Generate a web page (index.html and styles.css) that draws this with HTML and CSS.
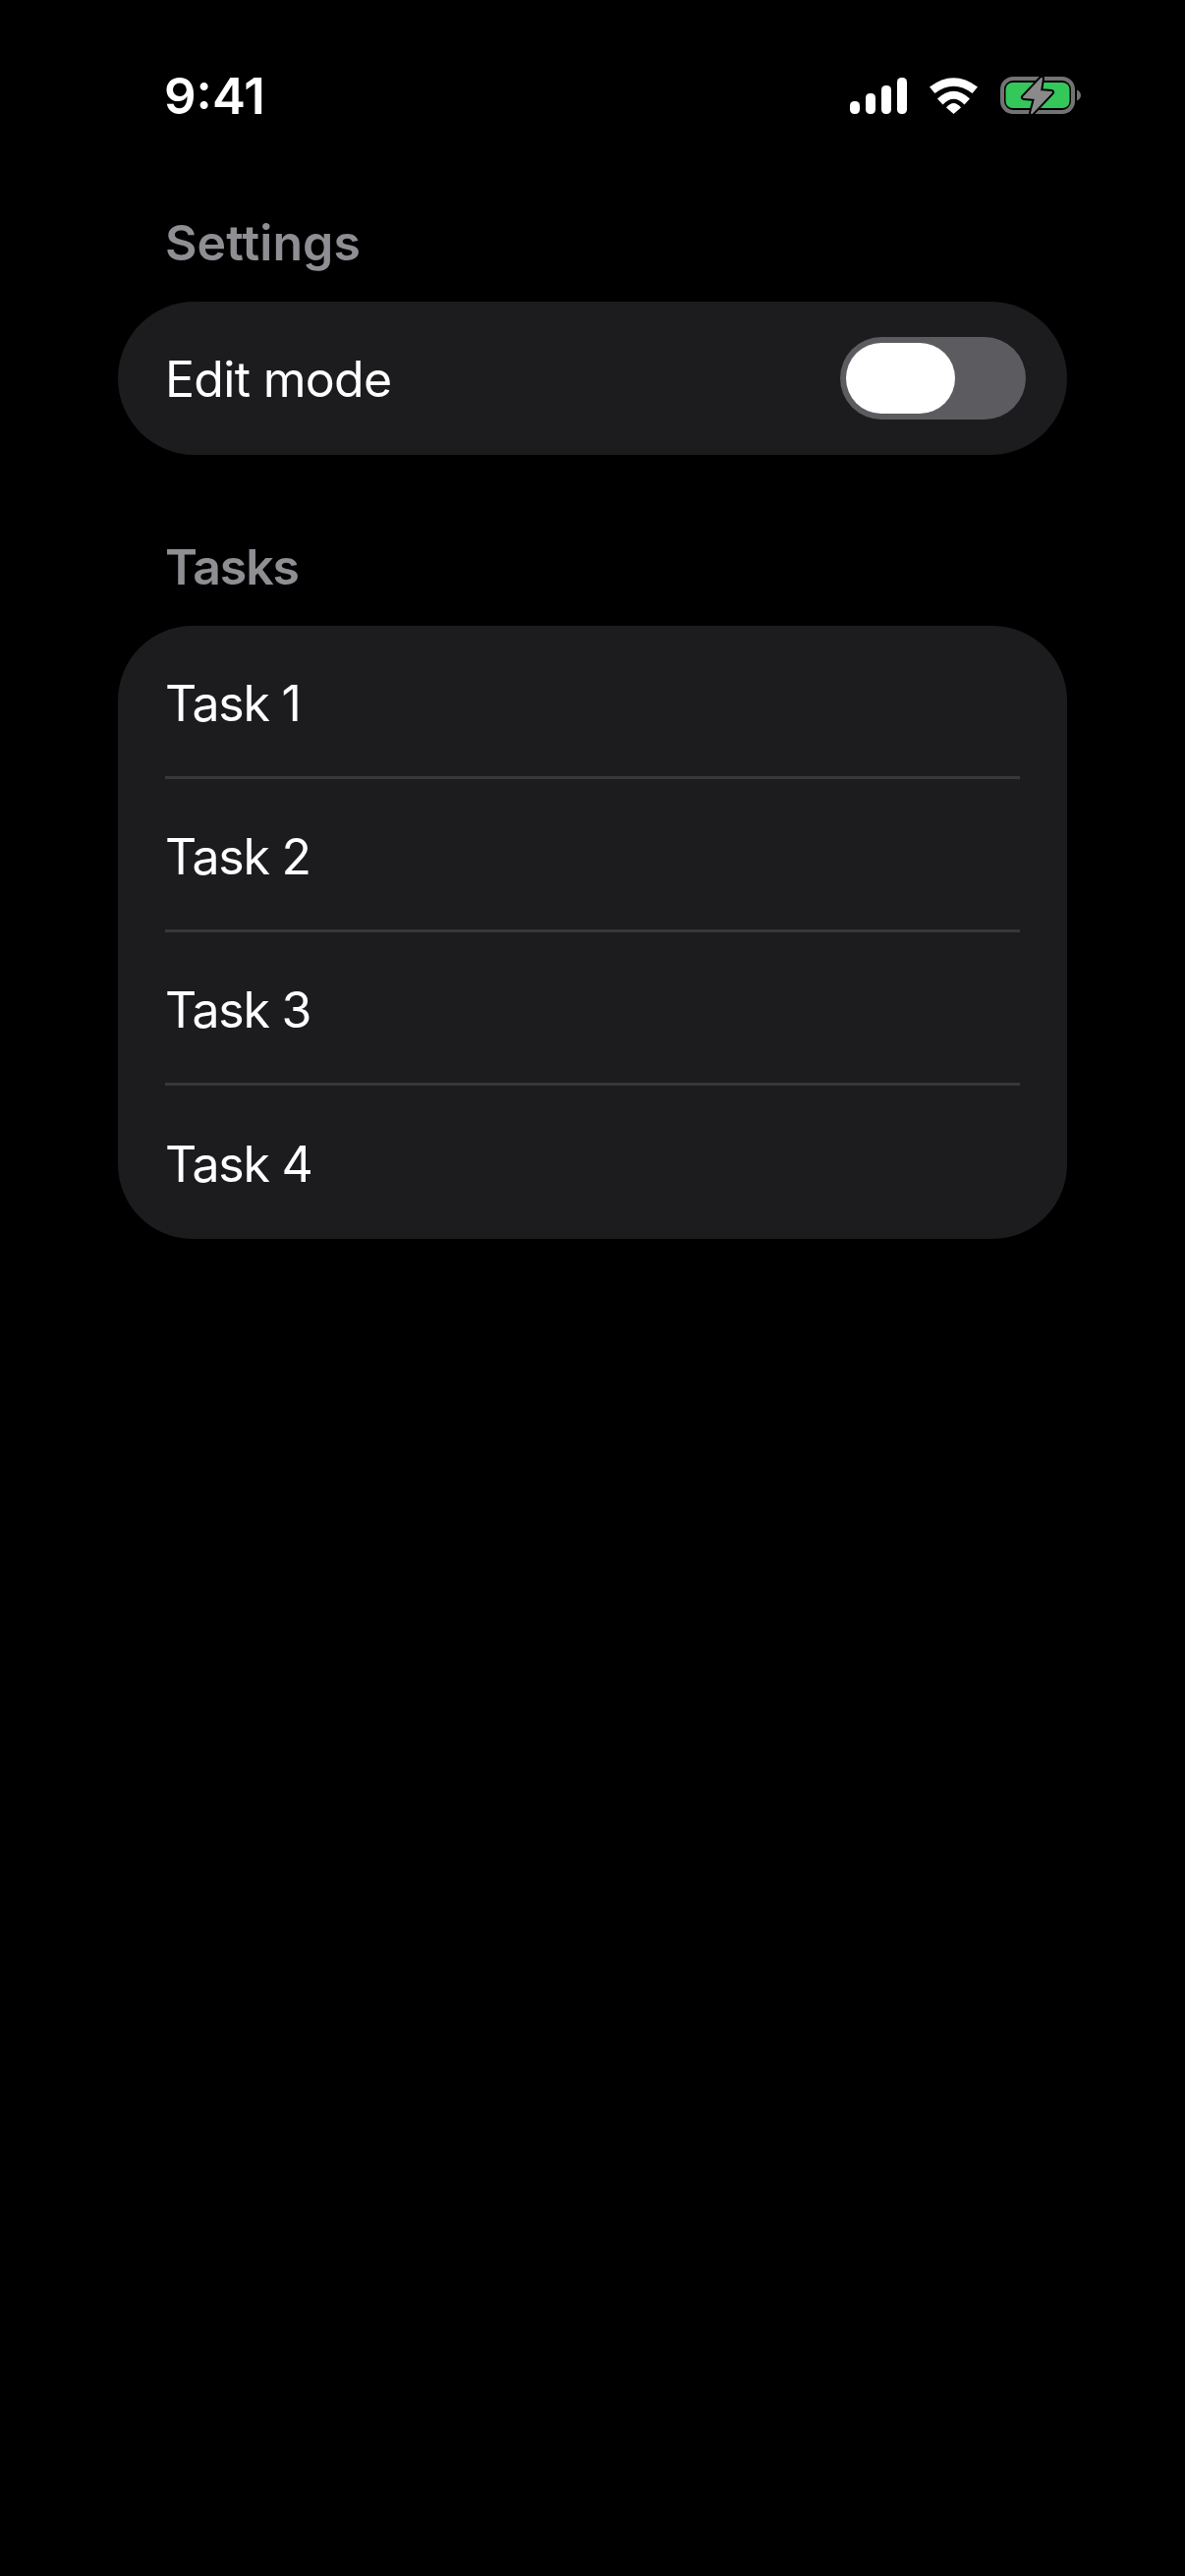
FILE: index.html
```html
<!DOCTYPE html>
<html lang="en">

<head>
    <meta charset="UTF-8">
    <meta name="viewport" content="width=device-width, initial-scale=1.0">
    <title>Settings</title>
    <link rel="stylesheet" href="styles.css">
</head>

<body>
    <div class="status">
        <span class="time">9:41</span>
        <div class="status-icons">
            <svg class="signal" width="58" height="37" viewBox="0 0 58 37">
                <rect x="0" y="24" width="10" height="13" rx="4.5" fill="#fff" />
                <rect x="16" y="16" width="10" height="21" rx="4.5" fill="#fff" />
                <rect x="32" y="8" width="10" height="29" rx="4.5" fill="#fff" />
                <rect x="48" y="0" width="10" height="37" rx="4.5" fill="#fff" />
            </svg>
            <svg class="wifi" width="50" height="37" viewBox="0 0 50 37">
                <path d="M0 9.5 Q24.5 -9 49 9.5 L43.5 16 Q24.5 1.5 5.5 16 Z" fill="#fff" />
                <path d="M8 21.5 Q24.5 6 41 21.5 L35.5 27.5 Q24.5 16 13.5 27.5 Z" fill="#fff" />
                <path d="M17 30.5 Q24.5 21.5 32 30.5 L24.5 37 Z" fill="#fff" />
            </svg>
            <svg class="battery" width="82" height="39" viewBox="0 0 82 39">
                <rect x="2" y="2" width="72" height="34" rx="11" fill="none" stroke="#737373" stroke-width="4" />
                <rect x="5.5" y="6" width="65" height="26" rx="7" fill="#34c759" />
                <path d="M78 13.5 C80.5 14.5 82 16.5 82 19 C82 21.5 80.5 23.5 78 24.5 Z" fill="#737373" />
                <path d="M42 2 L24 21 L36 22 L32 37 L52 16 L40 15 Z" fill="#000" stroke="#000" stroke-width="6" stroke-linejoin="round" />
                <path d="M42 2 L24 21 L36 22 L32 37 L52 16 L40 15 Z" fill="#8a8a8a" stroke="#8a8a8a" stroke-width="2" stroke-linejoin="round" />
            </svg>
        </div>
    </div>

    <main>
        <h2 class="section-title">Settings</h2>
        <div class="card card-pill">
            <div class="row row-toggle">
                <span>Edit mode</span>
                <div class="toggle">
                    <div class="thumb"></div>
                </div>
            </div>
        </div>

        <h2 class="section-title section-second">Tasks</h2>
        <ul class="card">
            <li class="row">Task 1</li>
            <li class="row">Task 2</li>
            <li class="row">Task 3</li>
            <li class="row">Task 4</li>
        </ul>
    </main>
</body>

</html>
```

FILE: styles.css
```css
* {
    margin: 0;
    padding: 0;
    box-sizing: border-box;
    list-style: none;
}

html,
body {
    width: 100%;
    height: 100%;
    background-color: #000;
    color: #fff;
    font-family: Inter, "Liberation Sans", sans-serif;
    overflow: hidden;
}

.status {
    height: 196px;
    padding: 70px 106px 0 167px;
    display: flex;
    justify-content: space-between;
    align-items: flex-start;
}

.time {
    font-size: 51px;
    line-height: 56px;
    font-weight: 600;
}

.status-icons {
    display: flex;
    align-items: flex-start;
    padding-top: 9px;
}

.signal {
    margin-right: 23px;
}

.wifi {
    margin-right: 22px;
}

.battery {
    margin-top: -1px;
}

main {
    padding: 0 120px;
}

.section-title {
    height: 111px;
    padding: 21px 0 0 48px;
    font-size: 50px;
    line-height: 60px;
    font-weight: 600;
    letter-spacing: 0.1px;
    color: #8e8e93;
}

.section-second {
    height: 174px;
    padding-top: 84px;
    letter-spacing: -1.1px;
}

.card {
    background-color: #1c1c1e;
    border-radius: 76px;
}

.card-pill {
    border-radius: 78px;
}

.row {
    height: 156px;
    margin-left: 48px;
    margin-right: 48px;
    padding-top: 5px;
    display: flex;
    align-items: center;
    font-size: 50px;
    line-height: 60px;
    letter-spacing: -1.2px;
    border-bottom: 3px solid #38383a;
}

.row:last-child {
    padding-top: 3px;
    border-bottom: none;
}

.row-toggle {
    justify-content: space-between;
    margin-right: 42px;
    letter-spacing: -0.7px;
}

.row-toggle:last-child {
    padding-top: 0;
}

.row-toggle span {
    padding-top: 1px;
}

.toggle {
    width: 189px;
    height: 84px;
    border-radius: 42px;
    background-color: #5c5c60;
    padding: 6px;
}

.thumb {
    width: 111px;
    height: 72px;
    border-radius: 36px;
    background-color: #fff;
}
```
